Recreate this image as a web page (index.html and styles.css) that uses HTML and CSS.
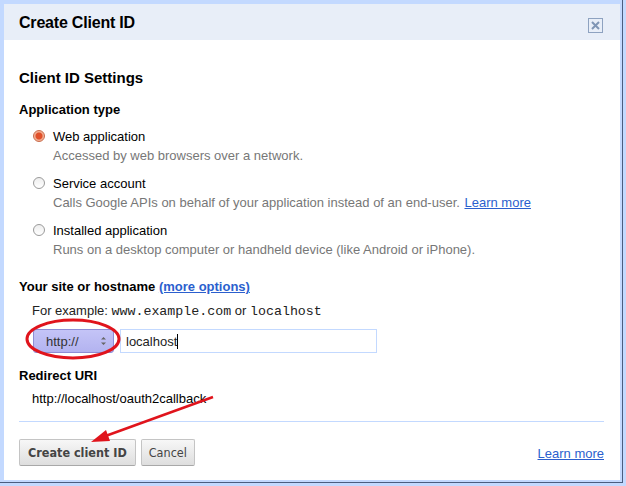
FILE: index.html
```html
<!DOCTYPE html>
<html lang="en">
<head>
    <meta charset="UTF-8">
    <title>Create Client ID</title>
    <link rel="stylesheet" href="styles.css">
</head>
<body>
    <div class="frame">
        <div class="dialog">
            <header class="dialog-head">
                <h1>Create Client ID</h1>
                <span class="close">
                    <svg width="9" height="9" viewBox="0 0 9 9"><path d="M1 1L8 8M8 1L1 8" stroke="#7f95b5" stroke-width="2"/></svg>
                </span>
            </header>

            <main class="dialog-body">
                <h2>Client ID Settings</h2>

                <h3>Application type</h3>
                <div class="option">
                    <span class="radio checked"></span>
                    <div>
                        <div class="label">Web application</div>
                        <div class="desc">Accessed by web browsers over a network.</div>
                    </div>
                </div>
                <div class="option">
                    <span class="radio"></span>
                    <div>
                        <div class="label">Service account</div>
                        <div class="desc">Calls Google APIs on behalf of your application instead of an end-user. <a href="#">Learn more</a></div>
                    </div>
                </div>
                <div class="option">
                    <span class="radio"></span>
                    <div>
                        <div class="label">Installed application</div>
                        <div class="desc">Runs on a desktop computer or handheld device (like Android or iPhone).</div>
                    </div>
                </div>

                <h3 class="host-title">Your site or hostname <a href="#">(more options)</a></h3>
                <p class="example">For example: <code>www.example.com</code> or <code>localhost</code></p>
                <div class="host-row">
                    <div class="scheme">
                        <span>http://</span>
                        <svg width="7" height="12" viewBox="0 0 7 12"><path d="M1 4.5L3.5 2L6 4.5Z M1 7.5L3.5 10L6 7.5Z" fill="#666"/></svg>
                    </div>
                    <div class="host-input">localhost<span class="caret"></span></div>
                </div>

                <h3 class="redirect-title">Redirect URI</h3>
                <p class="redirect">http://localhost/oauth2callback</p>
            </main>

            <footer class="dialog-foot">
                <div class="buttons">
                    <button class="btn btn-primary">Create client ID</button>
                    <button class="btn">Cancel</button>
                </div>
                <a href="#" class="foot-link">Learn more</a>
            </footer>
        </div>

        <!-- annotation drawn over the screenshot -->
        <svg class="annot" width="626" height="486" viewBox="0 0 626 486">
            <ellipse cx="73" cy="339" rx="46" ry="19" fill="none" stroke="#e0141c" stroke-width="3"/>
            <path d="M213 397L100 438" stroke="#e0141c" stroke-width="2.5"/>
            <path d="M91 442L106 430L110 441Z" fill="#e0141c"/>
        </svg>
    </div>
</body>
</html>
```

FILE: styles.css
```css
body {
    margin: 0;
    background: #c3d9ff;
    font-family: "Liberation Sans", Arial, sans-serif;
    font-size: 13px;
    color: #222;
}
.frame {
    position: relative;
    width: 623px;
    height: 483px;
    padding: 4px 0 0 4px;
    box-sizing: border-box;
    border-right: 1px solid #4a5d80;
    border-bottom: 1px solid #4a5d80;
}
.dialog {
    width: 616px;
    height: 476px;
    background: white;
    display: flex;
    flex-direction: column;
}
.dialog-head {
    height: 36px;
    background: #e8eef8;
    display: flex;
    align-items: center;
    justify-content: space-between;
    padding: 0 17px 0 15px;
}
.dialog-head h1 {
    margin: 0;
    font-size: 16px;
    font-weight: bold;
    color: #000;
    letter-spacing: -0.2px;
    position: relative;
    top: 1px;
}
.close {
    width: 13px;
    height: 13px;
    border: 1px solid #8ea2c0;
    display: flex;
    align-items: center;
    justify-content: center;
    margin-top: 6px;
}
.dialog-body {
    padding: 28px 15px 0 15px;
    flex: 1;
}
h2 {
    margin: 0 0 13px;
    font-size: 15px;
    line-height: 20px;
    color: #000;
}
h3 {
    margin: 0 0 8px;
    font-size: 13px;
    line-height: 18px;
    color: #000;
}
a {
    color: #2b5fce;
}
.option {
    display: flex;
    gap: 8px;
    padding-left: 14px;
    margin-bottom: 9px;
    line-height: 19px;
}
.radio {
    width: 10px;
    height: 10px;
    border-radius: 50%;
    border: 1px solid #9a9a9a;
    background: linear-gradient(#eee, #fff);
    margin-top: 3px;
    flex-shrink: 0;
}
.radio.checked {
    border-color: #c86a4a;
    background: radial-gradient(circle, #e0502a 0, #e0502a 3px, #f2a88a 4px, #f7c6b0 6px);
}
.label {
    color: #000;
}
.desc {
    color: #777;
}
.desc a {
    margin-left: 1px;
}
.host-title {
    margin-top: 19px;
    margin-bottom: 6px;
}
.example {
    margin: 0 0 8px;
    padding-left: 13px;
    line-height: 18px;
    color: #222;
}
code {
    font-family: "Liberation Mono", "Courier New", monospace;
    font-size: 13.3px;
}
.host-row {
    display: flex;
    gap: 6px;
    padding-left: 14px;
    height: 24px;
}
.scheme {
    width: 81px;
    box-sizing: border-box;
    border: 1px solid #8d8dd6;
    border-radius: 3px;
    background: linear-gradient(#c4c4f7, #b3b3f0);
    display: flex;
    align-items: center;
    justify-content: space-between;
    padding: 0 6px 0 12px;
    color: #333;
}
.host-input {
    width: 257px;
    box-sizing: border-box;
    border: 1px solid #c3d9ff;
    display: flex;
    align-items: center;
    padding-left: 5px;
    color: #222;
}
.caret {
    display: inline-block;
    width: 1px;
    height: 15px;
    background: #000;
}
.redirect-title {
    margin-top: 14px;
    margin-bottom: 5px;
}
.redirect {
    margin: 0;
    padding-left: 13px;
    line-height: 18px;
    color: #000;
}
.dialog-foot {
    margin: 0 16px 14px 15px;
    border-top: 1px solid #c3d9ff;
    padding-top: 17px;
    display: flex;
    justify-content: space-between;
    align-items: flex-end;
}
.buttons {
    display: flex;
    gap: 5px;
}
.btn {
    height: 27px;
    padding: 0 7px;
    border: 1px solid #c4c4c4;
    border-bottom-color: #a8a8a8;
    border-radius: 2px;
    background: linear-gradient(#f7f7f7, #dedede);
    font-family: "DejaVu Sans Condensed", "DejaVu Sans", sans-serif;
    font-size: 12.5px;
    color: #444;
    white-space: nowrap;
}
.btn-primary {
    font-weight: bold;
    padding: 0 8px;
}
.foot-link {
    font-size: 13px;
    line-height: 18px;
    margin-bottom: 3px;
}
.annot {
    position: absolute;
    left: 0;
    top: 0;
    pointer-events: none;
}
```
